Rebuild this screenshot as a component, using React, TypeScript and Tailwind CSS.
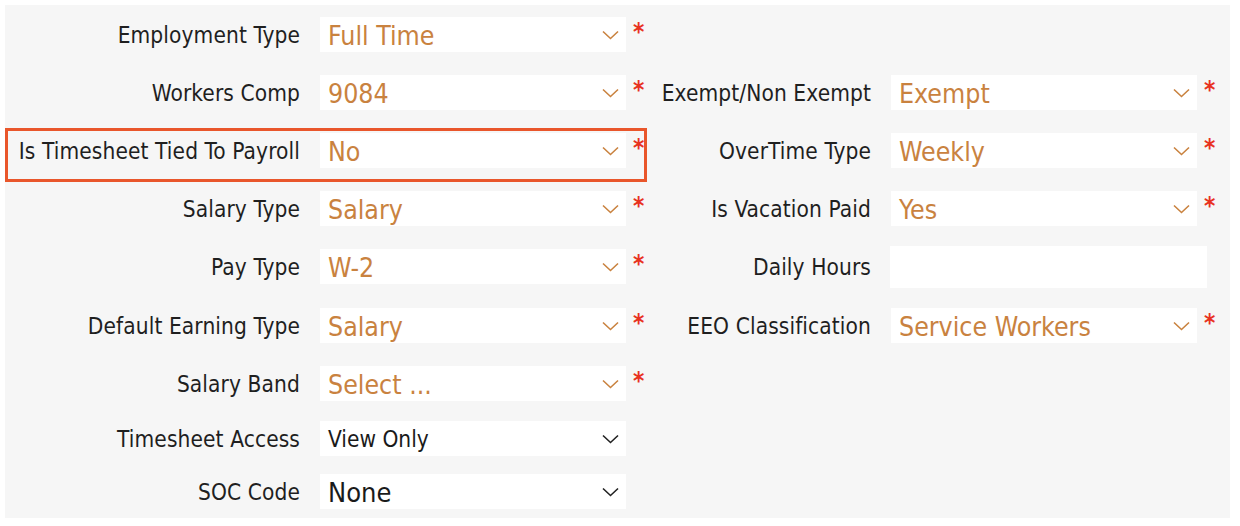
import React from "react";

type Field = {
  label: string;
  value?: string;
  kind?: "select" | "input";
  required?: boolean;
  plain?: boolean; // black value text
  small?: boolean;
};

type Row = {
  left: Field;
  right?: Field;
  highlight?: boolean;
  h: string;
  mt: string;
};

const rows: Row[] = [
  { left: { label: "Employment Type", value: "Full Time", required: true }, h: "h-[35px]", mt: "mt-0" },
  {
    left: { label: "Workers Comp", value: "9084", required: true },
    right: { label: "Exempt/Non Exempt", value: "Exempt", required: true },
    h: "h-[35px]",
    mt: "mt-[23px]",
  },
  {
    left: { label: "Is Timesheet Tied To Payroll", value: "No", required: true },
    right: { label: "OverTime Type", value: "Weekly", required: true },
    highlight: true,
    h: "h-[35px]",
    mt: "mt-[23px]",
  },
  {
    left: { label: "Salary Type", value: "Salary", required: true },
    right: { label: "Is Vacation Paid", value: "Yes", required: true },
    h: "h-[35px]",
    mt: "mt-[23px]",
  },
  {
    left: { label: "Pay Type", value: "W-2", required: true },
    right: { label: "Daily Hours", kind: "input" },
    h: "h-[35px]",
    mt: "mt-[23px]",
  },
  {
    left: { label: "Default Earning Type", value: "Salary", required: true },
    right: { label: "EEO Classification", value: "Service Workers", required: true },
    h: "h-[35px]",
    mt: "mt-[24px]",
  },
  { left: { label: "Salary Band", value: "Select ...", required: true }, h: "h-[35px]", mt: "mt-[23px]" },
  { left: { label: "Timesheet Access", value: "View Only", plain: true, small: true }, h: "h-[31px]", mt: "mt-[22px]" },
  { left: { label: "SOC Code", value: "None", plain: true }, h: "h-[35px]", mt: "mt-[20px]" },
];

function Chevron({ plain }: { plain?: boolean }) {
  return (
    <svg
      width="17"
      height="10"
      viewBox="0 0 17 10"
      fill="none"
      className={plain ? "text-[#222]" : "text-[#c9823f]"}
    >
      <path d="M1 1.5 L8.5 8.5 L16 1.5" stroke="currentColor" strokeWidth="1.6" />
    </svg>
  );
}

function Control({ field }: { field: Field }) {
  if (field.kind === "input") {
    return <div className="ml-[19px] h-[42px] w-[317px] shrink-0 bg-white" />;
  }
  return (
    <div className="flex items-center">
      <div className="ml-[20px] flex h-[35px] w-[306px] items-center justify-between bg-white pl-[8px] pr-[7px]">
        <span
          className={
            field.plain
              ? field.small
                ? "pt-[2px] text-[22.5px] text-[#1a1a1a]"
                : "pt-[3px] text-[27px] text-[#1a1a1a]"
              : "pt-[3px] text-[26.5px] text-[#c9823f]"
          }
        >
          {field.value}
        </span>
        <Chevron plain={field.plain} />
      </div>
      {field.required ? (
        <span className="ml-[7px] -mt-[5px] text-[24px] font-bold leading-none text-[#e8321f]">*</span>
      ) : null}
    </div>
  );
}

export default function App() {
  return (
    <div className="h-[526px] w-[1240px] bg-white p-[5px] font-['DejaVu_Sans_Condensed','DejaVu_Sans',sans-serif]">
      <div className="flex h-[513px] w-[1225px] flex-col bg-[#f6f6f6] pt-[12px]">
        {rows.map((row) => (
          <div key={row.left.label} className={`flex items-center ${row.h} ${row.mt}`}>
            <div className="relative flex h-full w-[642px] shrink-0 items-center">
              {row.highlight ? (
                <span className="pointer-events-none absolute -top-[5px] -bottom-[14px] left-0 right-0 border-[3px] border-[#e9562b]" />
              ) : null}
              <label className="w-[295px] shrink-0 pt-[3px] text-right text-[22.5px] tracking-[0.1px] text-[#1f1f1f]">
                {row.left.label}
              </label>
              <Control field={row.left} />
            </div>
            {row.right ? (
              <div className="flex h-full items-center">
                <label className="w-[224px] shrink-0 pt-[3px] text-right text-[22.5px] tracking-[0.1px] text-[#1f1f1f]">
                  {row.right.label}
                </label>
                <Control field={row.right} />
              </div>
            ) : null}
          </div>
        ))}
      </div>
    </div>
  );
}
